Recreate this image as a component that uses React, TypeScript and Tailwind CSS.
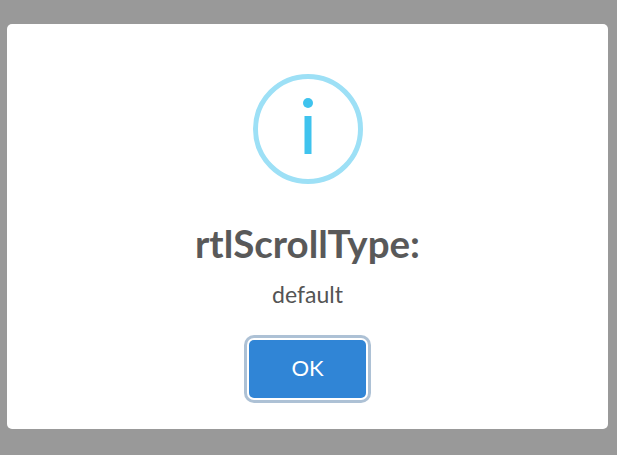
const App = () => {
  return (
    <div className="flex h-screen w-full items-start bg-[#999999] pl-[7px] pt-[24px] font-['Lato',sans-serif]">
      <div className="flex h-[405px] w-[601px] flex-col items-center rounded-[5px] bg-white pt-[50px]">
        <svg width="110" height="110" viewBox="0 0 110 110">
          <circle cx="55" cy="55" r="52.5" fill="none" stroke="#9de0f6" strokeWidth="5" />
          <circle cx="55" cy="29" r="5" fill="#3fc3ee" />
          <rect x="51.5" y="42" width="7" height="38" fill="#3fc3ee" />
        </svg>
        <h2 className="mt-[37px] text-[38.5px] leading-[45px] font-bold text-[#595959]">rtlScrollType:</h2>
        <div className="mt-[14px] text-[23px] leading-[28px] text-[#545454]">default</div>
        <button className="mt-[32px] h-[58px] w-[117px] rounded-[5px] bg-[#3085d6] pb-[3px] text-[22px] text-white shadow-[0_0_0_2px_#fff,0_0_0_5px_rgba(50,100,150,0.4)]">
          OK
        </button>
      </div>
    </div>
  );
};

export default App;
